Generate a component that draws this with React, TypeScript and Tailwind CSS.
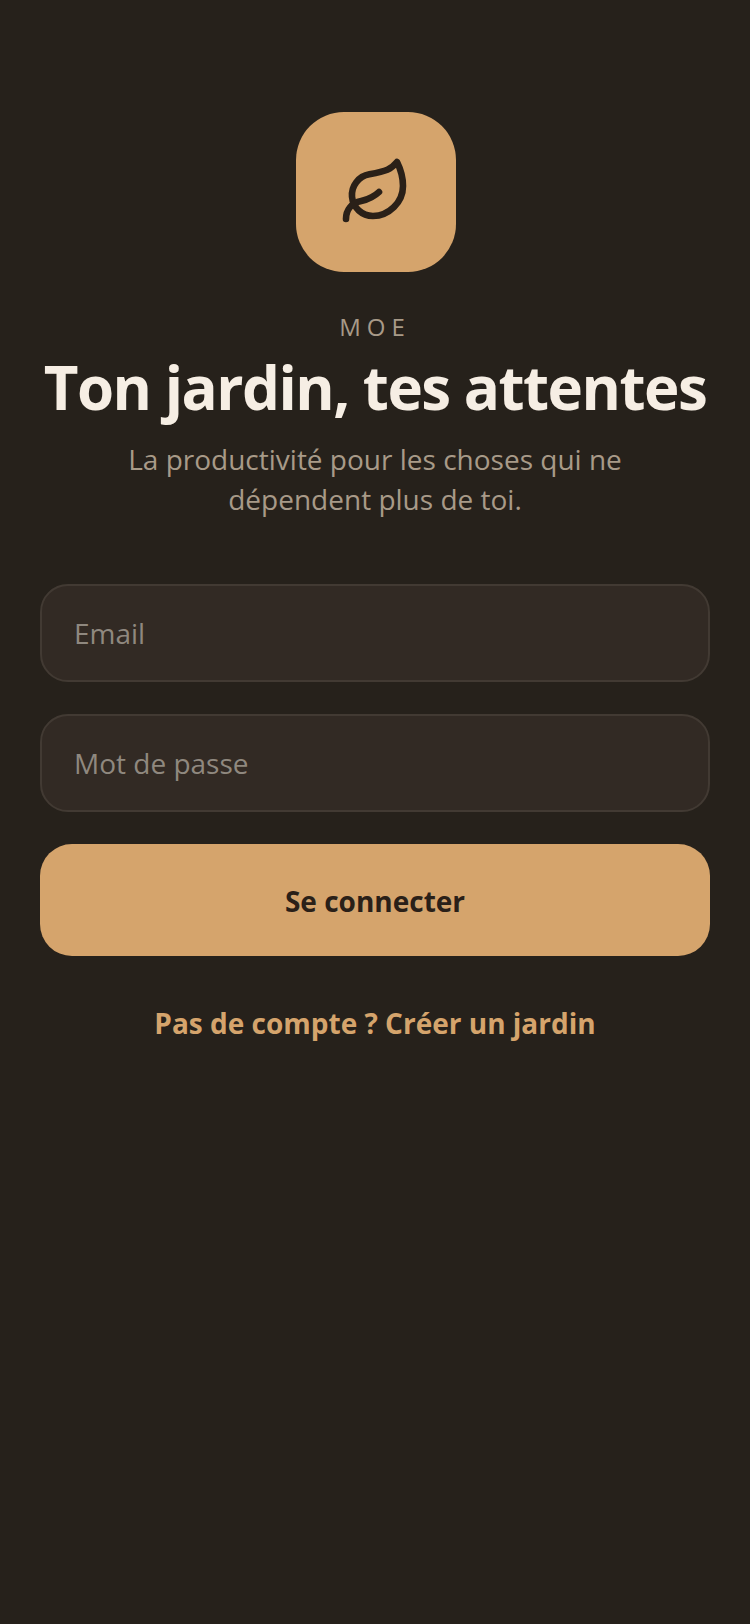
import React from 'react';
import { Leaf } from 'lucide-react';

const App: React.FC = () => {
  return (
    <div className="min-h-[1624px] bg-[#26211b] px-10 pt-28 flex flex-col items-center font-['Open_Sans',sans-serif]">
      <div className="ml-[2px] w-40 h-40 rounded-[48px] bg-[#d5a46c] flex items-center justify-center">
        <Leaf className="w-[72px] h-[72px] text-[#2a2018]" strokeWidth={2.2} />
      </div>
      <p className="mt-[39px] text-2xl leading-8 tracking-[6px] text-[#a89a88]">MOE</p>
      <h1 className="mt-2 text-[60px] leading-[72px] font-bold text-[#f6eee4] tracking-[-1.5px] whitespace-nowrap">
        Ton jardin, tes attentes
      </h1>
      <p className="mt-4 text-[28px] leading-10 text-[#a89a88] text-center">
        La productivité pour les choses qui ne
        <br />
        dépendent plus de toi.
      </p>

      <form className="mt-[65px] w-full flex flex-col">
        <input
          type="email"
          placeholder="Email"
          className="w-full h-[98px] px-8 bg-[#322a24] border-2 border-[#423a33] rounded-[28px] text-[28px] outline-none placeholder:text-[#8f887f]"
        />
        <input
          type="password"
          placeholder="Mot de passe"
          className="mt-8 w-full h-[98px] px-8 bg-[#322a24] border-2 border-[#423a33] rounded-[28px] text-[28px] outline-none placeholder:text-[#8f887f]"
        />
        <button
          type="button"
          className="mt-8 w-full h-28 pt-[2px] rounded-[32px] bg-[#d5a46c] text-[#2a2018] text-[28px] font-bold"
        >
          Se connecter
        </button>
      </form>

      <button type="button" className="mt-[47px] text-[28px] leading-10 font-bold text-[#d5a46c]">
        Pas de compte ? Créer un jardin
      </button>
    </div>
  );
};

export default App;
